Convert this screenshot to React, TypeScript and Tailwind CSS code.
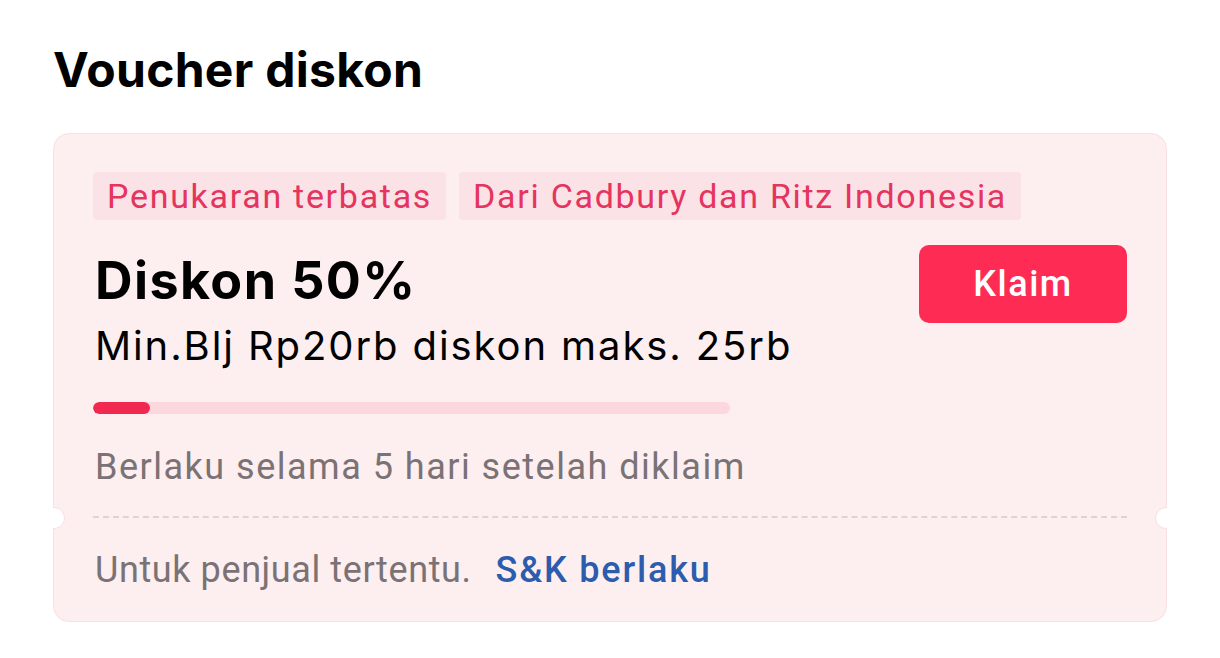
import React from "react"

const tags = ["Penukaran terbatas", "Dari Cadbury dan Ritz Indonesia"]

export default function App() {
  return (
    <div className="min-h-[658px] w-[1220px] bg-white pl-[53px] pt-[40px]">
      <h1 className="h-[60px] text-[48px] leading-[60px] font-bold text-black [font-family:Inter,sans-serif] tracking-[0.3px]">
        Voucher diskon
      </h1>
      <div className="relative mt-[33px] w-[1114px] h-[489px] rounded-[16px] border border-[#f8e0e3] bg-[#fdeef0]">
        {/* ticket notches */}
        <div className="absolute left-[-11px] top-[373px] w-[22px] h-[22px] rounded-full bg-white border border-[#f8e0e3]" />
        <div className="absolute right-[-11px] top-[373px] w-[22px] h-[22px] rounded-full bg-white border border-[#f8e0e3]" />
        <div className="absolute left-[-12px] top-[370px] w-[11px] h-[28px] bg-white" />
        <div className="absolute right-[-12px] top-[370px] w-[11px] h-[28px] bg-white" />

        <div className="px-[39px] pt-[38px]">
          <div className="flex gap-[13px]">
            {tags.map((t) => (
              <span
                key={t}
                className="h-[48px] px-[14px] flex items-center rounded-[4px] bg-[#fbe2e7] text-[#e5345d] text-[34px] tracking-[1.7px] [font-family:Roboto,sans-serif]"
              >
                {t}
              </span>
            ))}
          </div>

          <div className="flex justify-between mt-[25px]">
            <div className="pt-[6px] pl-[2px] [font-family:Inter,sans-serif]">
              <div className="h-[60px] text-[52px] leading-[60px] font-bold text-black tracking-[1.4px]">
                Diskon 50%
              </div>
              <div className="mt-[10px] h-[50px] text-[40px] leading-[50px] text-black tracking-[1.9px]">
                Min.Blj Rp20rb diskon maks. 25rb
              </div>
            </div>
            <button className="w-[208px] h-[78px] rounded-[10px] bg-[#fe2c55] text-white text-[36px] font-medium tracking-[1.5px] [font-family:Roboto,sans-serif]">
              Klaim
            </button>
          </div>

          <div className="mt-[31px] w-[637px] h-[12px] rounded-full bg-[#fcd7de] overflow-hidden">
            <div className="w-[57px] h-full rounded-full bg-[#f1284f]" />
          </div>

          <div className="mt-[31px] h-[44px] text-[36px] leading-[44px] text-[#7a7274] pl-[2px] tracking-[1.5px] [font-family:Roboto,sans-serif]">
            Berlaku selama 5 hari setelah diklaim
          </div>

          <div className="mt-[27px] border-t-2 border-dashed border-[#ddd3d5]" />

          <div className="mt-[30px] flex items-baseline gap-[24px] pl-[2px] text-[36px] leading-[44px] [font-family:Roboto,sans-serif]">
            <span className="text-[#7a7274] tracking-[0.6px]">Untuk penjual tertentu.</span>
            <span className="text-[#2b5cad] font-medium tracking-[1.8px]">S&amp;K berlaku</span>
          </div>
        </div>
      </div>
    </div>
  )
}
